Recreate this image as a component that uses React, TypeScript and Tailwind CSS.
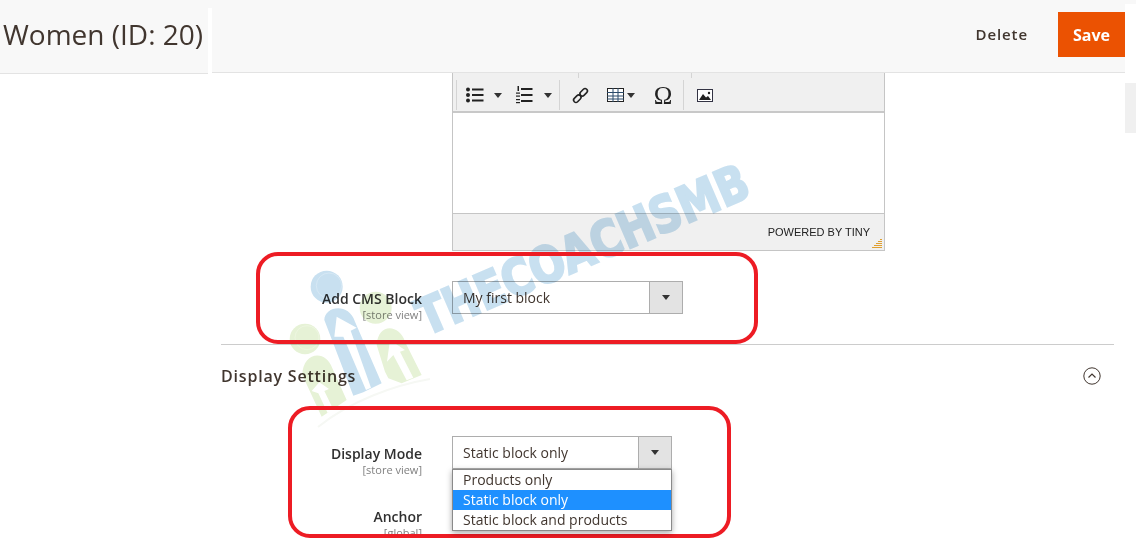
const font = { fontFamily: '"Open Sans", sans-serif' };

function Sep() {
  return <div className="w-px h-[30px] bg-[#d4d4d4]" />;
}

function Caret({ className = "" }: { className?: string }) {
  return (
    <svg width="8" height="5" viewBox="0 0 8 5" className={className}>
      <path d="M0 0h8L4 5z" fill="#333" />
    </svg>
  );
}

function Toolbar() {
  return (
    <div className="relative h-10 bg-[#f0f0f0] border-b-2 border-[#c8c8c8] flex items-center pl-[3px] pt-[6px]">
      <div className="absolute left-[125px] top-0 w-px h-[5px] bg-[#d4d4d4]" />
      <div className="absolute left-[238px] top-0 w-px h-[5px] bg-[#d4d4d4]" />
      <Sep />
      <svg width="18" height="16" viewBox="0 0 18 16" className="ml-[9px]">
        <g fill="#222">
          <circle cx="2" cy="2.5" r="2" /><circle cx="2" cy="8" r="2" /><circle cx="2" cy="13.5" r="2" />
          <rect x="6" y="1.5" width="11.5" height="2" /><rect x="6" y="7" width="11.5" height="2" /><rect x="6" y="12.5" width="11.5" height="2" />
        </g>
      </svg>
      <Caret className="ml-[10px]" />
      <svg width="17" height="18" viewBox="0 0 17 18" className="ml-[14px]">
        <g fill="#222">
          <rect x="5" y="2" width="11.5" height="2" /><rect x="5" y="8" width="11.5" height="2" /><rect x="5" y="14" width="11.5" height="2" />
          <rect x="1.5" y="0" width="1.5" height="5" /><rect x="0" y="6.5" width="4" height="1.2" /><rect x="0" y="9.5" width="4" height="1.2" /><rect x="0" y="13" width="4" height="1.2" /><rect x="0" y="16" width="4" height="1.2" />
        </g>
      </svg>
      <Caret className="ml-[11px]" />
      <div className="ml-[7px]"><Sep /></div>
      <svg width="17" height="17" viewBox="0 0 16 16" className="ml-[12px]" fill="none" stroke="#222" strokeWidth="1.5">
        <rect x="-4" y="-2.2" width="8" height="4.4" rx="2.2" transform="translate(5 11) rotate(-45)" />
        <rect x="-4" y="-2.2" width="8" height="4.4" rx="2.2" transform="translate(11 5) rotate(-45)" />
      </svg>
      <svg width="17" height="14" viewBox="0 0 17 14" className="ml-[18px]">
        <rect x="0.5" y="0.5" width="16" height="13" fill="#fff" stroke="#222" />
        <path d="M0 4.5h17M0 8h17M0 11h17M6 0v14M11 0v14" stroke="#2a4a6a" strokeWidth="1" />
      </svg>
      <Caret className="ml-[3px]" />
      <span className="ml-[15px] w-[26px] text-center text-[25px] leading-none text-[#222]" style={{ fontFamily: '"Liberation Serif", serif' }}>Ω</span>
      <div className="ml-[7px]"><Sep /></div>
      <svg width="16" height="13" viewBox="0 0 16 13" className="ml-[13px]">
        <rect x="0.5" y="0.5" width="15" height="12" fill="#fff" stroke="#334" />
        <path d="M2 11l4-6 3 3.5 2-1.5 3 4z" fill="#222" />
        <circle cx="12" cy="4" r="1.2" fill="#222" />
      </svg>
    </div>
  );
}

function Select({ value, width, btn }: { value: string; width: string; btn: string }) {
  return (
    <div className={`${width} h-[33px] flex border border-[#adadad] bg-white`}>
      <div className="flex-1 pl-[10px] text-[14px] leading-[31px] text-[#41362f]">{value}</div>
      <div className={`${btn} border-l border-[#adadad] bg-[#e3e3e3] flex items-center justify-center`}>
        <Caret />
      </div>
    </div>
  );
}

function FieldLabel({ name, scope }: { name: string; scope: string }) {
  return (
    <div className="w-[201px] text-right pt-[8px] mr-[30px]">
      <div className="text-[14px] leading-[19px] font-semibold text-[#303030]">{name}</div>
      <div className="text-[11px] leading-[11px] text-[#808080] mt-[1px]">{scope}</div>
    </div>
  );
}

function Watermark() {
  return (
    <svg className="absolute left-[280px] top-[165px] pointer-events-none mix-blend-multiply" width="490" height="270" viewBox="0 0 490 270">
      <g transform="translate(5 100) scale(0.3333)">
        <g fill="#e6f2d6">
          <circle cx="60" cy="222" r="46" />
          <circle cx="272" cy="128" r="48" />
          <path d="M52 330C52 262 122 250 142 310L185 405 110 455Z" />
          <path d="M275 240C280 170 345 180 360 230L410 330 350 355 310 340 300 320Z" />
        </g>
        <g fill="#fff">
          <path d="M103 352L132 372 118 378 146 436 128 444 100 385 80 378Z" />
          <path d="M315 225L360 255 345 260 385 338 365 346 325 270 306 290Z" />
        </g>
        <g fill="#c8e0f0">
          <circle cx="125" cy="65" r="48" />
          <path d="M118 165C118 125 190 110 210 170L290 355 235 382 205 392Z" />
        </g>
        <circle cx="132" cy="62" r="38" fill="none" stroke="#dcebf6" strokeWidth="2" />
        <circle cx="66" cy="218" r="36" fill="none" stroke="#f0f7e6" strokeWidth="2" />
        <path d="M155 155L215 188 197 197 258 368 243 375 175 215 148 215Z" fill="#fff" />
      </g>
      <path d="M38 262C70 236 115 220 150 214" stroke="#f6f8f4" strokeWidth="2" fill="none" />
      <text
        x="146"
        y="171"
        transform="rotate(-23.3 146 171)"
        fill="#c8e0f0"
        stroke="#c8e0f0"
        strokeWidth="2.5"
        style={{ fontFamily: '"DejaVu Sans", sans-serif', fontSize: "50px", fontWeight: 700 }}
        textLength="356"
        lengthAdjust="spacingAndGlyphs"
      >
        THECOACHSMB
      </text>
    </svg>
  );
}

export default function App() {
  return (
    <div className="relative w-[1136px] h-[538px] overflow-hidden bg-white" style={font}>
      <header className="flex h-[73px] bg-[#f8f8f8]">
        <div className="w-[208px] h-[74px] shrink-0 bg-[#f8f8f8] border-b border-[#e3e3e3] pl-[3px]">
          <h1 className="text-[28px] leading-[69px] text-[#41362f]">Women (ID: 20)</h1>
        </div>
        <div className="w-[4px] mt-[8px] h-[66px] shrink-0 bg-white" />
        <div className="flex-1 h-[73px] border-b border-[#e3e3e3] flex items-start justify-end pt-[12px]">
          <span className="text-[15px] font-semibold tracking-[0.9px] leading-[44px] text-[#41362f] mr-[30px]">Delete</span>
          <button className="w-[67px] h-[45px] bg-[#eb5202] text-white font-bold text-[16px]">Save</button>
        </div>
        <div className="w-[11px] mt-[4px] h-[69px] shrink-0 bg-white" />
      </header>

      <div className="absolute right-0 top-[83px] w-[11px] h-[50px] bg-[#f0f0f0]" />

      <main className="ml-[221px] w-[893px]">
        <div className="ml-[231px] w-[433px] border-x border-[#c5c5c5]">
          <Toolbar />
          <div className="h-[100px] bg-white" />
          <div className="relative h-[38px] bg-[#f0f0f0] border-y border-[#c5c5c5] text-right pr-[14px] text-[11px] leading-[36px] text-[#222]" style={{ fontFamily: '"Liberation Sans", sans-serif' }}>
            POWERED BY TINY
            <svg width="10" height="9" viewBox="0 0 10 9" className="absolute right-[2px] bottom-[2px]">
              <path d="M8 0h2v1H8zM6 2h4v1H6zM4 4h6v1H4zM2 6h8v1H2zM0 8h10v1H0z" fill="#e0a030" />
            </svg>
          </div>
        </div>

        <div className="flex mt-[30px] h-[33px]">
          <FieldLabel name="Add CMS Block" scope="[store view]" />
          <Select value="My first block" width="w-[231px]" btn="w-[33px]" />
        </div>

        <div className="mt-[30px] pt-[2px] border-t border-[#cccccc] h-[61px] flex items-center justify-between">
          <h2 className="text-[16px] font-semibold tracking-[0.8px] text-[#41362f]">Display Settings</h2>
          <svg width="18" height="18" viewBox="0 0 18 18" className="mr-[13px]" fill="none" stroke="#41362f" strokeWidth="1">
            <circle cx="9" cy="9" r="8.2" />
            <path d="M5.5 10.5L9 7l3.5 3.5" strokeWidth="1.2" />
          </svg>
        </div>

        <div className="flex mt-[31px] h-[33px]">
          <FieldLabel name="Display Mode" scope="[store view]" />
          <div className="relative">
            <Select value="Static block only" width="w-[220px]" btn="w-[33px]" />
            <ul className="absolute z-10 left-0 top-[33px] w-[220px] h-[62px] bg-white border border-[#8a8a8a] shadow-[0_2px_6px_rgba(0,0,0,0.35)] text-[14px] leading-[20px] text-[#41362f]">
              <li className="pl-[10px]">Products only</li>
              <li className="pl-[10px] bg-[#1e90ff] text-white">Static block only</li>
              <li className="pl-[10px]">Static block and products</li>
            </ul>
          </div>
        </div>
        <div className="flex mt-[30px]">
          <FieldLabel name="Anchor" scope="[global]" />
        </div>
      </main>

      <Watermark />

      <div className="absolute left-[256px] top-[252px] w-[502px] h-[92px] border-[4px] border-[#ed1c24] rounded-[22px]" />
      <div className="absolute left-[288px] top-[406px] w-[443px] h-[132px] border-[4px] border-[#ed1c24] rounded-[22px]" />
    </div>
  );
}
